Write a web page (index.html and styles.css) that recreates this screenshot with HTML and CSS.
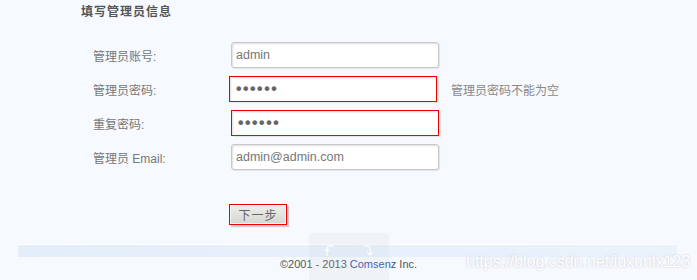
FILE: index.html
```html
<!DOCTYPE html>
<html>
<head>
    <title>填写管理员信息</title>
    <link rel="stylesheet" href="styles.css">
</head>
<body>
    <div class="main">
        <h3 class="title">填写管理员信息</h3>
        <div class="form">
            <div class="field">
                <label>管理员账号:</label>
                <input type="text" class="txt" value="admin">
            </div>
            <div class="field">
                <label>管理员密码:</label>
                <input type="password" class="txt err shift" value="123456">
                <span class="tip">管理员密码不能为空</span>
            </div>
            <div class="field">
                <label>重复密码:</label>
                <input type="password" class="txt err" value="123456">
            </div>
            <div class="field">
                <label>管理员 Email:</label>
                <input type="text" class="txt" value="admin@admin.com">
            </div>
            <div class="btnrow">
                <button class="btn">下一步</button>
            </div>
        </div>
    </div>
    <div class="footer">
        <div class="band"></div>
        <p class="copy">&copy;2001 - 2013 <a href="#">Comsenz</a> Inc.</p>
        <div class="float-box">
            <svg width="12" height="12" viewBox="0 0 12 12"><path d="M3 11 V4 Q3 1 6 1 H10 M3 4 L1 6 M3 4 L5 6" fill="none" stroke="#fff" stroke-opacity="0.8" stroke-width="1.4"/></svg>
            <svg width="12" height="12" viewBox="0 0 12 12"><path d="M2 1 H6 Q8 1 8 4 V10 M8 10 L5 7 M8 10 L11 7" fill="none" stroke="#fff" stroke-opacity="0.8" stroke-width="1.4"/></svg>
        </div>
        <span class="mark">https://blog.csdn.net/luxunlx123</span>
    </div>
</body>
</html>
```

FILE: styles.css
```css
body{
    margin: 0;
    background-color: #f6f9fe;
    font-family: "Liberation Sans", "Noto Sans CJK SC", sans-serif;
    color: #666;
    height: 280px;
    overflow: hidden;
}
.main{
    padding-left: 81px;
    padding-top: 5px;
}
.title{
    margin: 0;
    font-size: 12px;
    line-height: 14px;
    font-weight: bold;
    color: #555;
    letter-spacing: 1px;
}
.form{
    padding-top: 19px;
    padding-left: 12px;
}
.field{
    display: flex;
    align-items: center;
    height: 34px;
}
.field label{
    width: 138px;
    font-size: 12px;
    color: #777;
}
.txt{
    box-sizing: border-box;
    width: 208px;
    height: 26px;
    margin: 0;
    padding: 0 4px;
    border: 1px solid #c8c8c8;
    border-radius: 3px;
    background: #fff;
    box-shadow: inset 1px 1px 2px #ddd, 1px 1px 1px #e4e4e4;
    font-family: "Liberation Sans", sans-serif;
    font-size: 12.5px;
    color: #777;
    outline: none;
}
.txt[type=password]{
    font-family: "DejaVu Sans", sans-serif;
    font-size: 16px;
    color: #666;
    letter-spacing: -2.4px;
}
.err{
    border: 1px solid #e00;
    border-radius: 0;
    box-shadow: inset 1px 1px 2px #ddd, 2px 1px 0 #e6e6e6;
}
.shift{
    margin-left: -2px;
}
.tip{
    margin-left: 14px;
    font-size: 12px;
    color: #888;
}
.btnrow{
    padding-top: 30px;
    padding-left: 136px;
}
.btn{
    box-sizing: border-box;
    width: 58px;
    height: 21px;
    margin: 0;
    padding: 0;
    border: 1px solid #e00;
    background: linear-gradient(#eeeeea, #d6d6d2);
    box-shadow: inset 0 0 0 1px #f4f4f0, 2px 2px 1px #ccc;
    font-family: "Noto Sans CJK SC", sans-serif;
    font-size: 12px;
    color: #666;
    letter-spacing: 1px;
}
.footer{
    position: relative;
    margin-top: 19px;
}
.band{
    margin-left: 18px;
    margin-right: 20px;
    height: 12px;
    border-top: 1px solid #fff;
    background: linear-gradient(90deg, #e4eefa, #eaf2fc);
}
.copy{
    margin: 0;
    text-align: center;
    font-size: 11px;
    line-height: 14px;
    color: #555;
}
.copy a{
    color: #3452a8;
    text-decoration: none;
}
.float-box{
    position: absolute;
    left: 309px;
    top: -11px;
    width: 80px;
    height: 50px;
    border-radius: 4px;
    background: rgba(200, 205, 215, 0.15);
    display: flex;
    gap: 26px;
    justify-content: center;
    padding-top: 12px;
    box-sizing: border-box;
}
.mark{
    position: absolute;
    left: 466px;
    top: 9px;
    font-size: 16px;
    color: #fff;
    text-shadow: 0 0 2px rgba(140, 145, 160, 0.55);
}
```
